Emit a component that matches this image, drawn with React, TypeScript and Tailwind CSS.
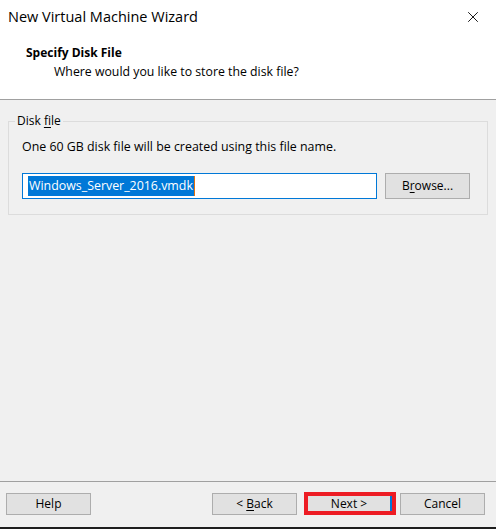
import { X } from "lucide-react";

const font = { fontFamily: '"Open Sans", "Noto Sans", sans-serif' };

function WinButton({ label, accel, rest, className = "" }: { label?: string; accel?: string; rest?: string; className?: string }) {
  return (
    <button
      className={
        "flex h-[22px] w-[85px] items-center justify-center border border-[#adadad] bg-[#e1e1e1] text-[12px] text-black " +
        className
      }
    >
      {label}
      {accel && <span className="underline underline-offset-2">{accel}</span>}
      {rest}
    </button>
  );
}

export default function App() {
  return (
    <div className="flex h-[529px] w-[496px] flex-col bg-[#f0f0f0]" style={font}>
      {/* header */}
      <div className="h-[100px] border-b border-[#a0a0a0] bg-white">
        <div className="flex h-[33px] items-center justify-between pl-[8px] pr-[14px]">
          <span className="text-[14.5px] text-black">New Virtual Machine Wizard</span>
          <X className="h-[18px] w-[18px] text-black" strokeWidth={1.2} />
        </div>
        <div className="pl-[26px] pt-[12px] text-[12px] font-bold leading-[16px] text-black">Specify Disk File</div>
        <div className="pl-[54px] pt-[3px] text-[12.3px] leading-[16px] text-black">
          Where would you like to store the disk file?
        </div>
      </div>

      {/* group box */}
      <fieldset className="mx-[8px] mt-[14px] h-[101px] border border-[#dcdcdc] px-[13px]">
        <legend className="ml-[-7px] px-[2px] text-[12px] leading-[14px] text-black">
          Disk <span className="underline underline-offset-2">f</span>ile
        </legend>
        <div className="pt-[11px] text-[12.4px] leading-[16px] text-black">
          One 60 GB disk file will be created using this file name.
        </div>
        <div className="mt-[18px] flex items-center gap-[8px]">
          <div className="flex h-[26px] w-[355px] items-center border border-[#0078d7] bg-white px-[5px]">
            <span className="bg-[#0078d7] px-[1px] text-[12.4px] leading-[20px] text-white">Windows_Server_2016.vmdk</span>
            <span className="h-[20px] w-[1px] bg-[#e07010]" />
          </div>
          <WinButton label="B" accel="r" rest="owse..." className="h-[26px] w-[85px]" />
        </div>
      </fieldset>

      <div className="flex-1" />

      {/* footer */}
      <div className="border-t border-[#a0a0a0]">
        <div className="flex items-center px-[6px] pb-[12px] pt-[10px]">
          <WinButton label="Help" />
          <div className="flex-1" />
          <WinButton label={"<\u00a0"} accel="B" rest="ack" />
          <div className="ml-[7px] flex h-[23px] w-[92px] items-center justify-center border-[4px] border-[#ed1c24] bg-[#e1e1e1]">
            <div className="flex h-full w-full items-center justify-center border-r-2 border-[#0078d7] text-[12px] text-black">
              Next &gt;
            </div>
          </div>
          <WinButton label="Cancel" className="ml-[4px]" />
          <div className="w-[5px]" />
        </div>
      </div>
      <div className="h-[2px] bg-[#1e1e1e]" />
    </div>
  );
}
